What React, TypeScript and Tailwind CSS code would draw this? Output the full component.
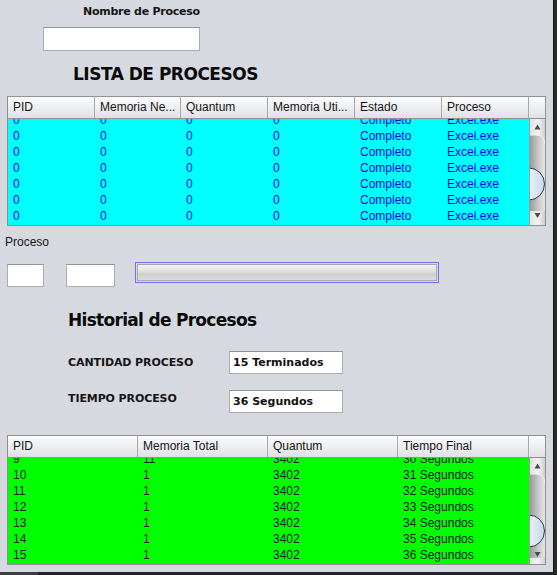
import React from "react";

const dv = { fontFamily: '"DejaVu Sans", Verdana, sans-serif' };
const lib = { fontFamily: '"Liberation Sans", Arial, sans-serif' };

function ScrollBar({ thumbTop }: { thumbTop: number }) {
  const t = thumbTop;
  return (
    <div className="w-[16px] h-[106px] border-l border-[#9c9ea2] bg-[#e4e4e4]">
      <svg width="15" height="106" viewBox="0 0 15 106" className="block">
        <defs>
          <linearGradient id={`tg${t}`} x1="0" x2="1" y1="0" y2="0">
            <stop offset="0" stopColor="#e2e2e2" />
            <stop offset="0.55" stopColor="#f2f2f2" />
            <stop offset="1" stopColor="#cfcfcf" />
          </linearGradient>
          <linearGradient id={`sg${t}`} x1="0" x2="1" y1="0" y2="0">
            <stop offset="0" stopColor="#9a9a9a" />
            <stop offset="0.5" stopColor="#c4c4c4" />
            <stop offset="1" stopColor="#e6e6e6" />
          </linearGradient>
          <linearGradient id={`th${t}`} x1="0" x2="1" y1="0" y2="0">
            <stop offset="0" stopColor="#b9cde2" />
            <stop offset="0.5" stopColor="#e9f0f7" />
            <stop offset="1" stopColor="#c9d8e8" />
          </linearGradient>
        </defs>
        <rect x="0" y="0" width="15" height="106" fill={`url(#tg${t})`} />
        <path
          d={`M0,16 H6 Q15,16 15,26 V${t + 42} Q15,${t + 43} 7,${t + 43} H0 Z`}
          fill={`url(#sg${t})`}
        />
        <path d="M0,16 H6 Q15,16 15,26" fill="none" stroke="#f4f4f4" strokeWidth="1" />
        <ellipse cx="-1" cy={t + 16} rx="15.5" ry="16" fill={`url(#th${t})`} stroke="#2e3c4f" strokeWidth="1" />
        <polygon points="4.5,10.5 7.5,5.5 10.5,10.5" fill="#4a4a4a" />
        <polygon points="4.5,94 10.5,94 7.5,99" fill="#4a4a4a" />
      </svg>
    </div>
  );
}

function Table({
  cols,
  colCls,
  rows,
  bodyCls,
  thumbTop,
}: {
  cols: string[];
  colCls: string[];
  rows: string[][];
  bodyCls: string;
  thumbTop: number;
}) {
  return (
    <div className="ml-[7px] w-[539px] border border-[#8f9195] bg-[#d6d9df]" style={lib}>
      <div className="flex h-[21px] bg-[linear-gradient(to_bottom,#fbfbfc,#eef0f2_45%,#dfe1e5)] text-[12px] leading-[21px] text-[#141414]">
        {cols.map((c, i) => (
          <div key={i} className={`${colCls[i]} border-r border-[#a7a9ad] pl-[5px] whitespace-nowrap overflow-hidden`}>
            {c}
          </div>
        ))}
        <div className="flex-1" />
      </div>
      <div className="h-px bg-[#8f9195]" />
      <div className="flex h-[106px]">
        <div className={`w-[521px] h-[106px] overflow-hidden ${bodyCls}`}>
          <div className="-mt-[7px]">
            {rows.map((r, ri) => (
              <div key={ri} className="flex h-[16px] leading-[16px] text-[12px]">
                {r.map((c, ci) => (
                  <div key={ci} className={`${colCls[ci]} pl-[5px] whitespace-nowrap`}>
                    {c}
                  </div>
                ))}
              </div>
            ))}
          </div>
        </div>
        <ScrollBar thumbTop={thumbTop} />
      </div>
    </div>
  );
}

function Field({ cls, text }: { cls: string; text?: string }) {
  return (
    <div
      className={`${cls} bg-white border border-[#acadb0] border-t-[#929396] pl-[3px] text-[11px] font-bold leading-[21px] text-[#111] whitespace-nowrap`}
      style={dv}
    >
      {text}
    </div>
  );
}

export default function App() {
  const rows1 = Array.from({ length: 7 }, () => ["0", "0", "0", "0", "Completo", "Excel.exe"]);
  const rows2 = Array.from({ length: 7 }, (_, i) => [
    String(9 + i),
    i === 0 ? "11" : "1",
    "3402",
    `${30 + i} Segundos`,
  ]);

  return (
    <div className="w-[557px] h-[575px] overflow-hidden flex flex-col bg-[#d6d9df]">
      <div className="flex h-[572px]">
        <div className="w-[553px] h-[572px] flex flex-col">
          <div
            className="mt-[5px] ml-[83px] h-[14px] leading-[14px] text-[11px] font-bold tracking-[-0.25px] text-[#151515] whitespace-nowrap"
            style={dv}
          >
            Nombre de Proceso
          </div>
          <Field cls="mt-[8px] ml-[43px] w-[157px] h-[24px]" />
          <div
            className="mt-[13px] ml-[73px] h-[20px] leading-[20px] text-[17px] font-bold tracking-[-0.5px] text-[#0a0a0a] whitespace-nowrap"
            style={dv}
          >
            LISTA DE PROCESOS
          </div>
          <div className="mt-[12px]">
            <Table
              cols={["PID", "Memoria Ne...", "Quantum", "Memoria Uti...", "Estado", "Proceso"]}
              colCls={["w-[87px]", "w-[86px]", "w-[87px]", "w-[87px]", "w-[87px]", "w-[87px]"]}
              rows={rows1}
              bodyCls="bg-[#00ffff] text-[#0000ff]"
              thumbTop={49}
            />
          </div>
          <div className="mt-[9px] ml-[5px] h-[14px] leading-[14px] text-[12px] text-[#141414]" style={lib}>
            Proceso
          </div>
          <div className="mt-[13px] flex items-start h-[25px]">
            <Field cls="ml-[7px] mt-[2px] w-[37px] h-[23px]" />
            <Field cls="ml-[22px] mt-[2px] w-[49px] h-[23px]" />
            <div className="ml-[20px] w-[304px] h-[21px] border border-[#6f6ff0] p-px">
              <div className="w-full h-full border border-[#a9a9ab] bg-[linear-gradient(to_bottom,#f3f3f3,#e4e4e4_35%,#d0d0d0_60%,#dadada)]" />
            </div>
          </div>
          <div
            className="mt-[23px] ml-[68px] h-[20px] leading-[20px] text-[17px] font-bold tracking-[-0.7px] text-[#0a0a0a] whitespace-nowrap"
            style={dv}
          >
            Historial de Procesos
          </div>
          <div className="mt-[21px] flex items-start h-[23px]">
            <div
              className="ml-[68px] mt-[5px] w-[161px] h-[14px] leading-[14px] text-[11px] font-bold text-[#151515] whitespace-nowrap tracking-[-0.1px]"
              style={dv}
            >
              CANTIDAD PROCESO
            </div>
            <Field cls="w-[114px] h-[23px]" text="15 Terminados" />
          </div>
          <div className="mt-[16px] flex items-start h-[23px]">
            <div
              className="ml-[68px] mt-[2px] w-[161px] h-[14px] leading-[14px] text-[11px] font-bold text-[#151515] whitespace-nowrap tracking-[-0.1px]"
              style={dv}
            >
              TIEMPO PROCESO
            </div>
            <Field cls="w-[114px] h-[23px]" text="36 Segundos" />
          </div>
          <div className="mt-[22px]">
            <Table
              cols={["PID", "Memoria Total", "Quantum", "Tiempo Final"]}
              colCls={["w-[130px]", "w-[130px]", "w-[130px]", "w-[131px]"]}
              rows={rows2}
              bodyCls="bg-[#00ff00] text-[#141414]"
              thumbTop={57}
            />
          </div>
        </div>
        <div className="w-[4px] h-[572px] bg-[#2b2b2b] border-l border-[#141414]" />
      </div>
      <div className="flex h-[3px]">
        <div className="w-[38px] bg-[#3c3f41]" />
        <div className="flex-1 bg-[#232425]" />
      </div>
    </div>
  );
}
